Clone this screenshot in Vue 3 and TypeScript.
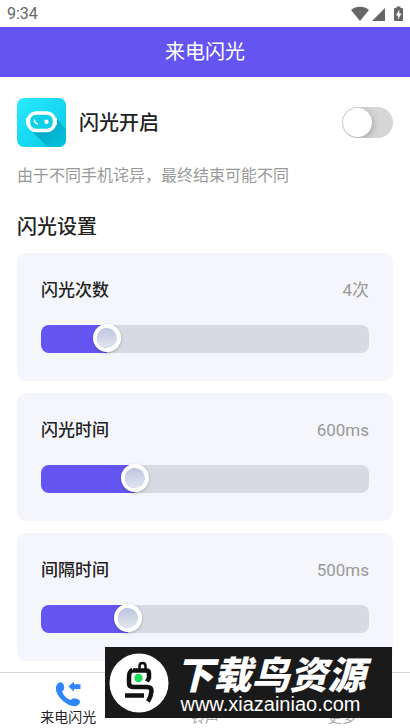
<script setup lang="ts">
import { reactive, ref } from 'vue'

interface Setting {
  id: string
  label: string
  unit: string
  min: number
  max: number
  step: number
  value: number
}

const enabled = ref(false)
const activeTab = ref('call')

const settings = reactive<Setting[]>([
  { id: 'count', label: '闪光次数', unit: '次', min: 0, max: 20, step: 1, value: 4 },
  { id: 'duration', label: '闪光时间', unit: 'ms', min: 200, max: 1600, step: 50, value: 600 },
  { id: 'interval', label: '间隔时间', unit: 'ms', min: 100, max: 1600, step: 50, value: 500 },
])

const tabs = [
  { id: 'call', label: '来电闪光' },
  { id: 'ring', label: '铃声' },
  { id: 'more', label: '更多' },
]

function fill(s: Setting): string {
  return `${((s.value - s.min) / (s.max - s.min)) * 100}%`
}
</script>

<template>
  <div class="page">
    <div class="status">
      <span>9:34</span>
      <svg class="status-icons" viewBox="0 0 52 16" aria-hidden="true">
        <path d="M0 4C5-.2 13-.2 18 4L9 15z" />
        <path d="M34 2v13H21z" />
        <path d="M44 2h1.500V.5h4V2H51q1 0 1 1v11q0 1-1 1h-7q-1 0-1-1V3q0-1 1-1z" />
        <path class="bolt" d="M48.300 3.500l-3.300 6h2v4l3.500-6h-2.200z" />
      </svg>
    </div>

    <header class="bar"><h1>来电闪光</h1></header>

    <main class="content">
      <div class="power">
        <svg class="logo" viewBox="0 0 49 49" aria-hidden="true">
          <defs>
            <linearGradient id="logo-bg" x1="0" y1="0" x2="1" y2="1">
              <stop offset="0" stop-color="#2aeaff" />
              <stop offset="1" stop-color="#08c8e6" />
            </linearGradient>
            <linearGradient id="logo-shade" x1="0.2" y1="0.2" x2="0.9" y2="0.9">
              <stop offset="0" stop-color="#04a4c0" />
              <stop offset="1" stop-color="#07c4e0" />
            </linearGradient>
            <clipPath id="logo-clip"><rect width="49" height="49" rx="7" /></clipPath>
          </defs>
          <g clip-path="url(#logo-clip)">
            <rect width="49" height="49" fill="url(#logo-bg)" />
            <path d="M13 31L37 17L53 37V53H34z" fill="url(#logo-shade)" />
            <rect x="11.500" y="15" width="26" height="17.500" rx="7.500" fill="#10cfe9" stroke="#fff" stroke-width="3.500" />
            <path d="M9.800 20.500v6M39.200 20.500v6" stroke="#fff" stroke-width="1.500" stroke-linecap="round" />
            <path d="M17.300 22q.3 3.300 3.100 3.900" fill="none" stroke="#fff" stroke-width="1.500" stroke-linecap="round" />
            <circle cx="29.500" cy="23.700" r="2.200" fill="#fff" />
          </g>
        </svg>
        <label class="power-label" for="power">闪光开启</label>
        <input id="power" v-model="enabled" class="switch" type="checkbox" role="switch" />
      </div>
      <p class="note">由于不同手机诧异，最终结束可能不同</p>

      <h2>闪光设置</h2>
      <section class="cards">
        <div v-for="s in settings" :key="s.id" class="card">
          <div class="card-head">
            <label :for="s.id">{{ s.label }}</label>
            <output :for="s.id">{{ s.value }}{{ s.unit }}</output>
          </div>
          <div class="track" :style="{ '--fill': fill(s) }">
            <input :id="s.id" v-model.number="s.value" type="range" :min="s.min" :max="s.max" :step="s.step" />
          </div>
        </div>
      </section>
    </main>

    <nav class="tabs">
      <button
        v-for="t in tabs"
        :key="t.id"
        type="button"
        :class="{ active: activeTab === t.id }"
        @click="activeTab = t.id"
      >
        <svg v-if="t.id === 'call'" class="tab-icon" viewBox="0 0 26 26" aria-hidden="true">
          <path d="M2 3.500C4 .5 7.500.5 8.500 3.500L9.300 6.500C9.600 8.500 7.500 9.300 7.300 10.500C8 14 12 18 15.300 18.800C16.500 18.800 17.800 16.800 19.500 17.200L23 18.200C26 19.500 25.500 22.500 22.500 24.500C18 27 10 22.500 6 18C2 13.500-.8 8 2 3.500z" />
          <path d="M13.500 5.500L19 .5V3.300H25.500V8H19v2.700z" />
        </svg>
        <span v-else class="tab-icon"></span>
        <span>{{ t.label }}</span>
      </button>
    </nav>

    <aside class="watermark">
      <svg class="bird" viewBox="0 0 60 60" aria-hidden="true">
        <circle cx="30" cy="30" r="29.500" fill="#fff" />
        <g fill="none" stroke="#111" stroke-width="4.500" stroke-linejoin="round">
          <path d="M30.500 16v-3q0-3 3-3t3 3v3" stroke-width="2.500" />
          <path d="M24 17.500H37q3 0 3 3V25l-2 3.500" />
          <path d="M23.500 16.500Q20 19 20 24v6q0 4 4 4h14q4.500 0 4.500 4-.5 6-3.500 10.500" />
          <path d="M16 42.500h19" />
        </g>
        <circle cx="29.500" cy="25" r="4.200" fill="#16df57" />
      </svg>
      <div class="watermark-text">
        <strong>下载鸟资源</strong>
        <span>www.xiazainiao.com</span>
      </div>
    </aside>
  </div>
</template>

<style>
body {
  margin: 0;
  background: #fff;
}
</style>

<style scoped>
.page {
  position: relative;
  display: flex;
  flex-direction: column;
  min-height: 100vh;
  color: #222;
  font-family: Roboto, "Noto Sans CJK SC", sans-serif;
}

.status {
  display: flex;
  align-items: center;
  justify-content: space-between;
  height: 27px;
  padding: 0 7px;
  color: #666;
  font-size: 16px;
}

.status-icons {
  width: 52px;
  height: 16px;
  fill: #666;
}

.status-icons .bolt {
  fill: #fff;
}

.bar {
  display: flex;
  align-items: center;
  justify-content: center;
  height: 50px;
  background: #6455f3;
  color: #fff;
}

h1,
h2,
p {
  margin: 0;
}

h1 {
  font-size: 20px;
  font-weight: 400;
  line-height: 30px;
}

.content {
  padding: 21px 17px 11px;
}

.power {
  display: flex;
  align-items: center;
}

.logo {
  width: 49px;
  height: 49px;
}

.power-label {
  margin-left: 13px;
  font-size: 20px;
  font-weight: 500;
  line-height: 30px;
}

.switch {
  appearance: none;
  display: flex;
  width: 51px;
  height: 31px;
  margin: 0 0 0 auto;
  padding: 1px;
  box-sizing: border-box;
  border-radius: 16px;
  background: #d6d6d6;
  overflow: hidden;
}

.switch::before {
  content: "";
  width: 29px;
  height: 29px;
  border-radius: 50%;
  background: #fff;
  box-shadow: 2px 2px 6px rgba(0, 0, 0, 0.2);
}

.switch:checked {
  justify-content: flex-end;
  background: #6455f3;
}

.note {
  margin-top: 17px;
  color: #999;
  font-size: 16px;
  line-height: 24px;
}

h2 {
  margin-top: 24px;
  font-size: 20px;
  font-weight: 500;
  line-height: 30px;
}

.cards {
  display: grid;
  gap: 12px;
  margin-top: 11px;
}

.card {
  padding: 24px 24px 28px;
  border-radius: 9px;
  background: #f5f6fb;
}

.card-head {
  display: flex;
  justify-content: space-between;
  margin-bottom: 22px;
  font-size: 17px;
  line-height: 26px;
}

.card-head label {
  font-weight: 500;
}

.card-head output {
  color: #999;
}

.track {
  display: grid;
  height: 28px;
  border-radius: 8px;
  background: linear-gradient(to right, #6455f3 var(--fill), #d8dae3 var(--fill));
}

.track input {
  appearance: none;
  height: 28px;
  margin: -1px -14px 0;
  background: transparent;
}

.track input::-webkit-slider-thumb {
  appearance: none;
  box-sizing: border-box;
  width: 28px;
  height: 28px;
  border: 4px solid #fff;
  border-radius: 50%;
  background: linear-gradient(#bdc6df, #e2e6ee) padding-box;
  box-shadow: 0 1px 3px rgba(0, 0, 0, 0.25);
}

.tabs {
  display: grid;
  grid-template-columns: repeat(3, 1fr);
  margin-top: auto;
  border-top: 1px solid #d6d6d6;
  background: #fff;
}

.tabs button {
  display: flex;
  flex-direction: column;
  align-items: center;
  height: 55px;
  padding: 8px 0 0;
  border: 0;
  background: none;
  color: #aaa;
  font: inherit;
  font-size: 14px;
  line-height: 20px;
}

.tabs .active {
  color: #222;
}

.tab-icon {
  width: 26px;
  height: 26px;
  fill: #2f86fb;
}

.watermark {
  position: absolute;
  right: 18px;
  bottom: 10px;
  display: flex;
  align-items: center;
  width: 287px;
  height: 71px;
  padding: 0 20px 0 4px;
  box-sizing: border-box;
  background: #1a1a1a;
  color: #fff;
}

.bird {
  flex: none;
  width: 60px;
  height: 60px;
}

.watermark-text {
  display: flex;
  flex: 1;
  flex-direction: column;
  align-items: center;
  padding-top: 4px;
  white-space: nowrap;
}

.watermark-text strong {
  font-family: "Noto Sans CJK SC", sans-serif;
  font-size: 38px;
  font-style: italic;
  font-weight: 900;
  line-height: 38px;
}

.watermark-text span {
  font-family: "Liberation Sans", Arial, sans-serif;
  font-size: 20px;
  line-height: 24px;
}
</style>
